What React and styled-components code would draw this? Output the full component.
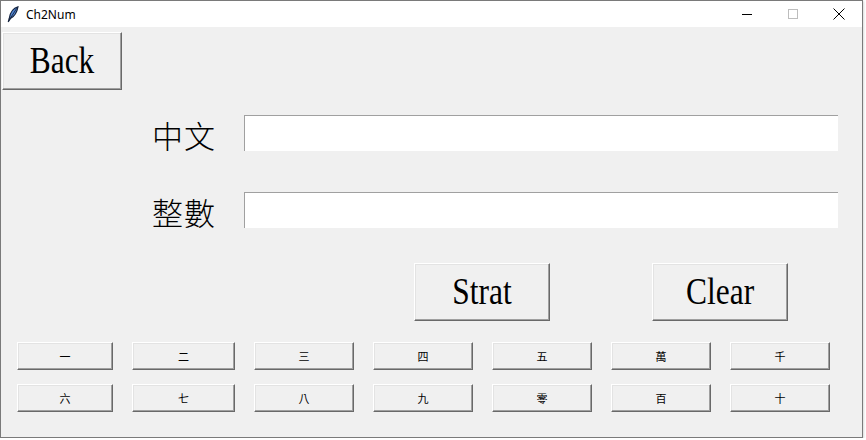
import React from 'react';
import styled, { createGlobalStyle } from 'styled-components';

const GlobalStyle = createGlobalStyle`
  html, body {
    margin: 0;
    padding: 0;
    background: #ffffff;
  }
  * {
    box-sizing: border-box;
  }
`;

const Window = styled.div`
  width: 863px;
  height: 438px;
  border: 1px solid #7a7a7a;
  background: #f0f0f0;
  display: flex;
  flex-direction: column;
  box-shadow: 1px 1px 2px rgba(0, 0, 0, 0.15);
`;

const TitleBar = styled.div`
  height: 26px;
  background: #ffffff;
  display: flex;
  align-items: center;
  padding-left: 6px;
  font-family: "Noto Sans", "Liberation Sans", sans-serif;
  font-size: 12px;
  color: #000;
`;

const Title = styled.span`
  margin-left: 7px;
  flex: 1;
`;

const Controls = styled.div`
  display: flex;
  height: 100%;
`;

const Control = styled.div`
  width: 46px;
  height: 100%;
  display: flex;
  align-items: center;
  justify-content: center;
`;

const Client = styled.div`
  flex: 1;
  display: flex;
  flex-direction: column;
`;

const TkButton = styled.button`
  font-family: ${p => (p.$small ? '"Noto Sans CJK TC", sans-serif' : '"Liberation Serif", serif')};
  font-size: ${p => (p.$small ? '11px' : '37px')};
  color: #000;
  background: #f0f0f0;
  border-top: 1px solid #ffffff;
  border-left: 1px solid #ffffff;
  border-right: 1px solid #696969;
  border-bottom: 1px solid #696969;
  box-shadow: inset -1px -1px 0 #a0a0a0, inset 1px 1px 0 #e3e3e3;
  padding: 0;
  margin: 0;
  display: flex;
  align-items: center;
  justify-content: center;
  line-height: 1;
`;

const Caption = styled.span`
  display: inline-block;
  transform: scaleX(0.85);
`;

const BackButton = styled(TkButton)`
  width: 120px;
  height: 58px;
  margin: 5px 0 0 1px;
  padding-bottom: 2px;
`;

const Form = styled.div`
  display: flex;
  flex-direction: column;
  gap: 41px;
  margin-top: 25px;
  padding-left: 151px;
`;

const Row = styled.div`
  display: flex;
  align-items: center;
  gap: 28px;
`;

const Label = styled.span`
  width: 64px;
  font-family: "Noto Sans CJK TC", sans-serif;
  font-weight: 300;
  font-size: 31px;
  line-height: 1;
  letter-spacing: 1px;
  color: #000;
  white-space: nowrap;
  padding-top: 2px;
`;

const Entry = styled.div`
  width: 594px;
  height: 36px;
  background: #ffffff;
  border-top: 1px solid #a0a0a0;
  border-left: 1px solid #a0a0a0;
`;

const Actions = styled.div`
  display: flex;
  gap: 102px;
  margin-top: 35px;
  padding-left: 413px;
`;

const ActionButton = styled(TkButton)`
  width: 136px;
  height: 58px;
  padding-bottom: 2px;
`;

const Keys = styled.div`
  display: grid;
  grid-template-columns: 96px 103px 100px 100px 100px 100px 100px;
  grid-auto-rows: 28px;
  column-gap: 19px;
  row-gap: 14px;
  margin-top: 21px;
  padding-left: 16px;
`;

const Feather = () => (
  <svg width="12" height="17" viewBox="0 0 12 17">
    <path d="M11 0.8 C6.5 2 3.2 6.5 2.2 12.5 L1.2 16 L3.4 12.6 C7 10.5 10 6.5 11 0.8 Z" fill="#4f86d6" stroke="#15233d" strokeWidth="1.1" />
    <path d="M9.8 2.2 L2.6 13.4" stroke="#15233d" strokeWidth="0.9" />
  </svg>
);

const keyRows = [
  ['一', '二', '三', '四', '五', '萬', '千'],
  ['六', '七', '八', '九', '零', '百', '十'],
];

const App = () => {
  return (
    <>
      <GlobalStyle />
      <Window>
        <TitleBar>
          <Feather />
          <Title>Ch2Num</Title>
          <Controls>
            <Control>
              <svg width="11" height="11" viewBox="0 0 11 11">
                <path d="M0 5.5 H10" stroke="#000" strokeWidth="1" />
              </svg>
            </Control>
            <Control>
              <svg width="11" height="11" viewBox="0 0 11 11">
                <rect x="0.5" y="0.5" width="9" height="9" fill="none" stroke="#bdbdbd" strokeWidth="1" />
              </svg>
            </Control>
            <Control>
              <svg width="12" height="12" viewBox="0 0 12 12">
                <path d="M0.5 0.5 L11.5 11.5 M11.5 0.5 L0.5 11.5" stroke="#000" strokeWidth="1" />
              </svg>
            </Control>
          </Controls>
        </TitleBar>
        <Client>
          <BackButton><Caption>Back</Caption></BackButton>
          <Form>
            <Row>
              <Label>中文</Label>
              <Entry />
            </Row>
            <Row>
              <Label>整數</Label>
              <Entry />
            </Row>
          </Form>
          <Actions>
            <ActionButton><Caption>Strat</Caption></ActionButton>
            <ActionButton><Caption>Clear</Caption></ActionButton>
          </Actions>
          <Keys>
            {keyRows.flat().map(k => (
              <TkButton key={k} $small>{k}</TkButton>
            ))}
          </Keys>
        </Client>
      </Window>
    </>
  );
};

export default App;
